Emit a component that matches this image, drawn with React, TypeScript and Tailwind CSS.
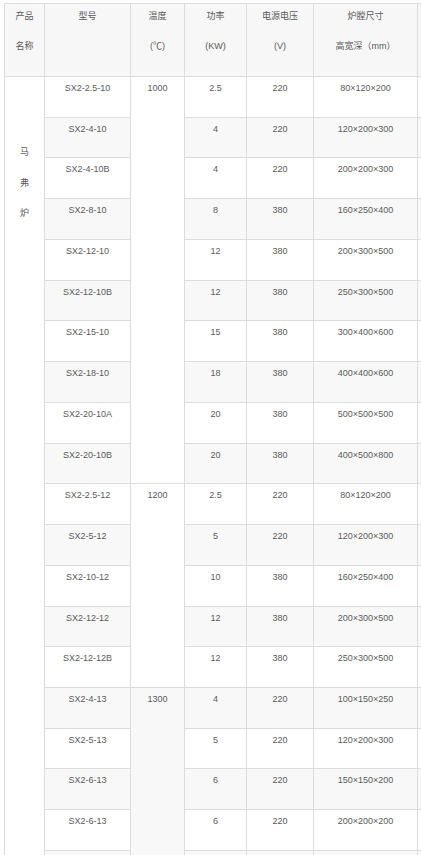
const rows = [
  ['SX2-2.5-10', '2.5', '220', '80×120×200'],
  ['SX2-4-10', '4', '220', '120×200×300'],
  ['SX2-4-10B', '4', '220', '200×200×300'],
  ['SX2-8-10', '8', '380', '160×250×400'],
  ['SX2-12-10', '12', '380', '200×300×500'],
  ['SX2-12-10B', '12', '380', '250×300×500'],
  ['SX2-15-10', '15', '380', '300×400×600'],
  ['SX2-18-10', '18', '380', '400×400×600'],
  ['SX2-20-10A', '20', '380', '500×500×500'],
  ['SX2-20-10B', '20', '380', '400×500×800'],
  ['SX2-2.5-12', '2.5', '220', '80×120×200'],
  ['SX2-5-12', '5', '220', '120×200×300'],
  ['SX2-10-12', '10', '380', '160×250×400'],
  ['SX2-12-12', '12', '380', '200×300×500'],
  ['SX2-12-12B', '12', '380', '250×300×500'],
  ['SX2-4-13', '4', '220', '100×150×250'],
  ['SX2-5-13', '5', '220', '120×200×300'],
  ['SX2-6-13', '6', '220', '150×150×200'],
  ['SX2-6-13', '6', '220', '200×200×200'],
  ['SX2-8-13', '8', '380', '200×250×300'],
];

// temperature groups: start row index -> [temp, span]
const temps: Record<number, [string, number]> = {
  0: ['1000', 10],
  10: ['1200', 5],
  15: ['1300', 5],
};

const cell = 'border-r border-b border-[#dcdcdc] text-center leading-[22px]';

export default function App() {
  return (
    <div
      className="w-[421px] h-[855px] overflow-hidden bg-white text-[9px] text-[#5a5a5a]"
      style={{ fontFamily: 'Arial, "Liberation Sans", "Noto Sans CJK SC", sans-serif' }}
    >
      <table className="mt-[3px] ml-[4px] border-collapse table-fixed w-[512px] border-t border-l border-[#dcdcdc]">
        <colgroup>
          <col className="w-[40px]" />
          <col className="w-[86px]" />
          <col className="w-[54px]" />
          <col className="w-[62px]" />
          <col className="w-[67px]" />
          <col className="w-[104px]" />
          <col className="w-[99px]" />
        </colgroup>
        <thead>
          <tr className="bg-[#f7f7f7] h-[73px] align-top">
            <th className={`${cell} font-normal`}>
              <div className="leading-6">产品</div>
              <div className="leading-6 mt-[6px]">名称</div>
            </th>
            <th className={`${cell} font-normal`}>
              <div className="leading-6">型号</div>
            </th>
            <th className={`${cell} font-normal`}>
              <div className="leading-6">温度</div>
              <div className="leading-6 mt-[6px]">(℃)</div>
            </th>
            <th className={`${cell} font-normal`}>
              <div className="leading-6">功率</div>
              <div className="leading-6 mt-[6px]">(KW)</div>
            </th>
            <th className={`${cell} font-normal`}>
              <div className="leading-6">电源电压</div>
              <div className="leading-6 mt-[6px]">(V)</div>
            </th>
            <th className={`${cell} font-normal`}>
              <div className="leading-6">炉膛尺寸</div>
              <div className="leading-6 mt-[6px]">高宽深（mm）</div>
            </th>
            <th className={`${cell} font-normal`}></th>
          </tr>
        </thead>
        <tbody>
          {rows.map((r, i) => (
            <tr key={i} className={`h-[40.74px] align-top ${i % 2 === 1 ? 'bg-[#f8f8f8]' : 'bg-white'}`}>
              {i === 0 && (
                <td rowSpan={rows.length} className={`${cell} bg-white pt-[60px]`}>
                  <div className="leading-[30.5px]">马</div>
                  <div className="leading-[30.5px]">弗</div>
                  <div className="leading-[30.5px]">炉</div>
                </td>
              )}
              <td className={cell}>{r[0]}</td>
              {temps[i] && (
                <td rowSpan={temps[i][1]} className={cell}>
                  {temps[i][0]}
                </td>
              )}
              <td className={cell}>{r[1]}</td>
              <td className={cell}>{r[2]}</td>
              <td className={cell}>{r[3]}</td>
              <td className={cell}></td>
            </tr>
          ))}
        </tbody>
      </table>
    </div>
  );
}
